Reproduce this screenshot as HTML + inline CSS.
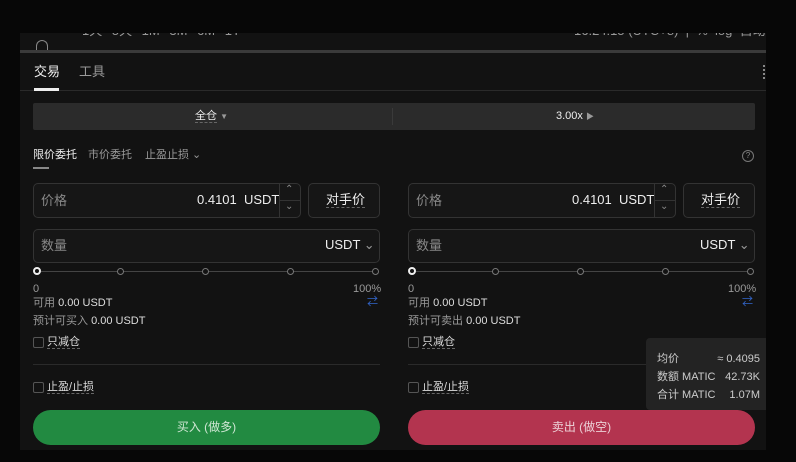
<!DOCTYPE html>
<html><head><meta charset="utf-8"><style>
*{margin:0;padding:0;box-sizing:border-box}
body{width:796px;height:462px;background:#070707;position:relative;overflow:hidden;font-family:"Liberation Sans","Noto Sans CJK SC",sans-serif;color:#ddd;font-size:11px;line-height:1.2}
.a{position:absolute}
.panel{left:20px;top:33px;width:746px;height:417px;background:#121212}
.inp{position:absolute;border:1px solid #333;border-radius:5px;background:#161616}
.lbl{color:#888;font-size:13px}
.dot{position:absolute;width:7px;height:7px;border:1.5px solid #777;border-radius:50%;background:#121212;top:-3px}
.cb{position:absolute;width:11px;height:11px;border:1px solid #555;border-radius:2px}
.ul{border-bottom:1px dashed #666}
</style></head><body>
<div class="a panel"></div>
<div class="a" style="left:20px;top:28px;width:746px;height:12px;overflow:hidden;background:#121212"><div style="position:absolute;left:62px;top:-5px;color:#999;font-size:13px;line-height:16px;word-spacing:6px">1天 5天 1M 3M 6M 1Y</div><div style="position:absolute;left:554px;top:-5px;color:#999;font-size:13px;line-height:16px">16:24:15 (UTC+8) &nbsp;| &nbsp;% &nbsp;log &nbsp;自动</div></div>
<div class="a" style="left:0;top:0;width:796px;height:33px;background:#070707"></div>
<div class="a" style="left:36px;top:40px;width:12px;height:12px;border:1.5px solid #888;border-bottom:none;border-radius:6px 6px 0 0"></div>
<div class="a" style="left:20px;top:50px;width:746px;height:3px;background:#3a3a3a"></div>
<div class="a" style="left:34px;top:64px;font-size:13px;color:#eee">交易</div>
<div class="a" style="left:79px;top:64px;font-size:13px;color:#999">工具</div>
<div class="a" style="left:763px;top:65px;width:2px;height:14px;border-left:2px dotted #888"></div>
<div class="a" style="left:20px;top:90px;width:746px;height:1px;background:#2a2a2a"></div>
<div class="a" style="left:34px;top:88px;width:25px;height:3px;background:#eee"></div>
<div class="a" style="left:33px;top:103px;width:722px;height:27px;background:#2b2b2b;border-radius:2px"></div>
<div class="a" style="left:392px;top:108px;width:1px;height:17px;background:#3a3a3a"></div>
<div class="a" style="left:195px;top:110px;font-size:11px;color:#eee"><span class="ul">全仓</span> <span style="color:#999;font-size:8px">▼</span></div>
<div class="a" style="left:556px;top:110px;font-size:11px;color:#eee">3.00x <span style="color:#999;font-size:8px">▶</span></div>
<div class="a" style="left:33px;top:149px;font-size:11px;color:#eee">限价委托</div>
<div class="a" style="left:33px;top:167px;width:16px;height:2px;background:#888"></div>
<div class="a" style="left:88px;top:149px;font-size:11px;color:#999">市价委托</div>
<div class="a" style="left:145px;top:149px;font-size:11px;color:#999">止盈止损 ⌄</div>
<div class="a" style="left:742px;top:150px;width:12px;height:12px;border:1px solid #777;border-radius:50%;font-size:8px;color:#888;text-align:center;line-height:10px">?</div>

<!-- left form -->
<div class="inp" style="left:33px;top:183px;width:268px;height:35px"></div>
<div class="a lbl" style="left:41px;top:193px">价格</div>
<div class="a" style="left:197px;top:192px;font-size:13px;color:#eee">0.4101 &nbsp;USDT</div>
<div class="a" style="left:279px;top:184px;width:1px;height:33px;background:#333"></div>
<div class="a" style="left:280px;top:200px;width:20px;height:1px;background:#333"></div>
<div class="a" style="left:285px;top:184px;color:#888;font-size:10px">⌃</div>
<div class="a" style="left:285px;top:201px;color:#888;font-size:10px">⌄</div>
<div class="inp" style="left:308px;top:183px;width:72px;height:35px"></div>
<div class="a" style="left:326px;top:192px;font-size:13px;color:#eee"><span class="ul">对手价</span></div>
<div class="inp" style="left:33px;top:229px;width:347px;height:34px"></div>
<div class="a lbl" style="left:41px;top:238px">数量</div>
<div class="a" style="left:325px;top:237px;font-size:13px;color:#eee">USDT <span style="color:#999">⌄</span></div>
<div class="a" style="left:36px;top:271px;width:340px;height:1px;background:#444">
<div class="dot" style="left:-3px;border-color:#eee;border-width:2px;width:8px;height:8px;top:-4px"></div><div class="dot" style="left:81px"></div><div class="dot" style="left:166px"></div><div class="dot" style="left:251px"></div><div class="dot" style="left:336px"></div></div>
<div class="a" style="left:33px;top:283px;color:#999">0</div>
<div class="a" style="left:353px;top:283px;color:#999">100%</div>
<div class="a" style="left:33px;top:297px;color:#999">可用 <span style="color:#ddd">0.00 USDT</span></div>
<div class="a" style="left:367px;top:296px;color:#3366cc;font-size:11px">⇄</div>
<div class="a" style="left:33px;top:315px;color:#999">预计可买入 <span style="color:#ddd">0.00 USDT</span></div>
<div class="cb" style="left:33px;top:337px"></div>
<div class="a" style="left:47px;top:336px;color:#ddd"><span class="ul">只减仓</span></div>
<div class="a" style="left:33px;top:364px;width:347px;height:1px;background:#2a2a2a"></div>
<div class="cb" style="left:33px;top:382px"></div>
<div class="a" style="left:47px;top:381px;color:#ddd"><span class="ul">止盈/止损</span></div>
<div class="a" style="left:33px;top:410px;width:347px;height:35px;border-radius:18px;background:#228a41;color:#cfe6d3;font-size:12px;text-align:center;line-height:35px">买入 (做多)</div>

<!-- right form -->
<div class="inp" style="left:408px;top:183px;width:268px;height:35px"></div>
<div class="a lbl" style="left:416px;top:193px">价格</div>
<div class="a" style="left:572px;top:192px;font-size:13px;color:#eee">0.4101 &nbsp;USDT</div>
<div class="a" style="left:654px;top:184px;width:1px;height:33px;background:#333"></div>
<div class="a" style="left:655px;top:200px;width:20px;height:1px;background:#333"></div>
<div class="a" style="left:660px;top:184px;color:#888;font-size:10px">⌃</div>
<div class="a" style="left:660px;top:201px;color:#888;font-size:10px">⌄</div>
<div class="inp" style="left:683px;top:183px;width:72px;height:35px"></div>
<div class="a" style="left:701px;top:192px;font-size:13px;color:#eee"><span class="ul">对手价</span></div>
<div class="inp" style="left:408px;top:229px;width:347px;height:34px"></div>
<div class="a lbl" style="left:416px;top:238px">数量</div>
<div class="a" style="left:700px;top:237px;font-size:13px;color:#eee">USDT <span style="color:#999">⌄</span></div>
<div class="a" style="left:411px;top:271px;width:340px;height:1px;background:#444">
<div class="dot" style="left:-3px;border-color:#eee;border-width:2px;width:8px;height:8px;top:-4px"></div><div class="dot" style="left:81px"></div><div class="dot" style="left:166px"></div><div class="dot" style="left:251px"></div><div class="dot" style="left:336px"></div></div>
<div class="a" style="left:408px;top:283px;color:#999">0</div>
<div class="a" style="left:728px;top:283px;color:#999">100%</div>
<div class="a" style="left:408px;top:297px;color:#999">可用 <span style="color:#ddd">0.00 USDT</span></div>
<div class="a" style="left:742px;top:296px;color:#3366cc;font-size:11px">⇄</div>
<div class="a" style="left:408px;top:315px;color:#999">预计可卖出 <span style="color:#ddd">0.00 USDT</span></div>
<div class="cb" style="left:408px;top:337px"></div>
<div class="a" style="left:422px;top:336px;color:#ddd"><span class="ul">只减仓</span></div>
<div class="a" style="left:408px;top:364px;width:240px;height:1px;background:#2a2a2a"></div>
<div class="cb" style="left:408px;top:382px"></div>
<div class="a" style="left:422px;top:381px;color:#ddd"><span class="ul">止盈/止损</span></div>
<div class="a" style="left:408px;top:410px;width:347px;height:35px;border-radius:18px;background:#b3344f;color:#ecd0d6;font-size:12px;text-align:center;line-height:35px">卖出 (做空)</div>

<!-- tooltip -->
<div class="a" style="left:646px;top:338px;width:120px;height:72px;background:#232323;border-radius:4px 0 0 4px"></div>
<div class="a" style="left:657px;top:350px;color:#ccc;line-height:18px">均价<br>数额 MATIC<br>合计 MATIC</div>
<div class="a" style="left:700px;top:350px;width:60px;color:#ccc;line-height:18px;text-align:right">≈ 0.4095<br>42.73K<br>1.07M</div>
</body></html>
